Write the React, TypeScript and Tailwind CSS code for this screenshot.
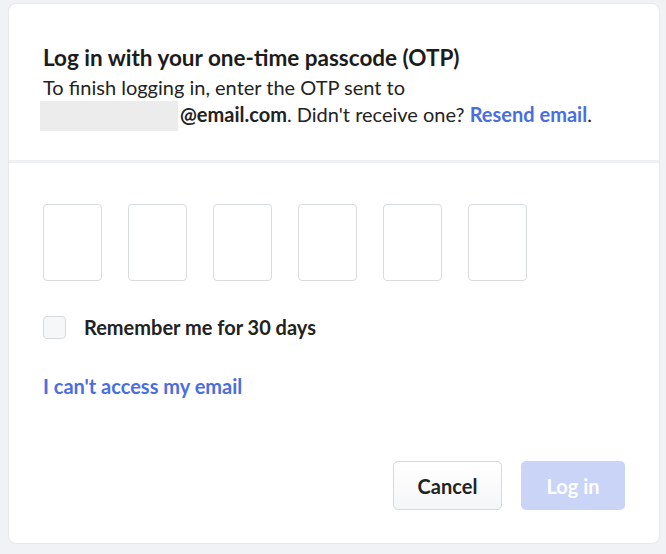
import { useState } from "react";

const digits = [0, 1, 2, 3, 4, 5];

export default function App() {
  const [code, setCode] = useState<string[]>(["", "", "", "", "", ""]);
  const [remember, setRemember] = useState(false);
  const ready = code.every((c) => c !== "");

  return (
    <div className="h-[554px] w-[666px] bg-[#f1f2f5] pt-[4px] pl-[9px] font-['Lato',sans-serif] text-[#232323]">
      <div className="flex h-[539px] w-[650px] flex-col rounded-[7px] bg-white shadow-[0_0_0_1px_#e7e9ed]">
        <div className="border-b-[3px] border-[#eef0f2] px-[34px] pt-[41px] pb-[30px]">
          <h1 className="text-[22.5px] font-bold leading-[26px] text-[#1c1c1c]">
            Log in with your one-time passcode (OTP)
          </h1>
          <p className="mt-[3px] text-[20px] leading-[27px]">
            To finish logging in, enter the OTP sent to
            <br />
            <span className="-mt-[2px] -mb-[1px] -ml-[3px] mr-[2px] inline-block h-[30px] w-[138px] bg-[#ececec] align-middle" />
            <span className="font-bold">@email.com</span>. Didn't receive one?{" "}
            <a href="#" className="font-bold text-[#4a6ee2]">
              Resend email
            </a>
            .
          </p>
        </div>

        <div className="flex flex-1 flex-col px-[34px] pt-[41px] pb-[33px]">
          <div className="flex gap-[26px]">
            {digits.map((i) => (
              <input
                key={i}
                maxLength={1}
                value={code[i]}
                onChange={(e) =>
                  setCode((prev) => prev.map((c, j) => (j === i ? e.target.value : c)))
                }
                className="h-[77px] w-[59px] rounded-[4px] border-[1.5px] border-[#d8dbe0] text-center text-[24px] outline-none"
              />
            ))}
          </div>

          <label className="mt-[34px] flex items-center gap-[18px]">
            <input
              type="checkbox"
              checked={remember}
              onChange={() => setRemember((v) => !v)}
              className="peer sr-only"
            />
            <span className="h-[23px] w-[23px] rounded-[4px] border-[1.5px] border-[#d6d9de] bg-[#f6f7f9]" />
            <span className="text-[20px] font-bold leading-[24px] text-[#222]">
              Remember me for 30 days
            </span>
          </label>

          <a href="#" className="mt-[35px] self-start text-[20px] font-bold leading-[24px] text-[#4a6ee2]">
            I can't access my email
          </a>

          <div className="mt-auto flex justify-end gap-[19px]">
            <button className="h-[49px] w-[109px] rounded-[5px] border-[1.5px] border-[#d5d8dd] bg-gradient-to-b from-white to-[#f5f6f8] text-[20px] font-bold text-[#222]">
              Cancel
            </button>
            <button
              disabled={!ready}
              className="h-[49px] w-[104px] rounded-[5px] bg-[#c9d4f6] text-[20px] font-bold text-white"
            >
              Log in
            </button>
          </div>
        </div>
      </div>
    </div>
  );
}
